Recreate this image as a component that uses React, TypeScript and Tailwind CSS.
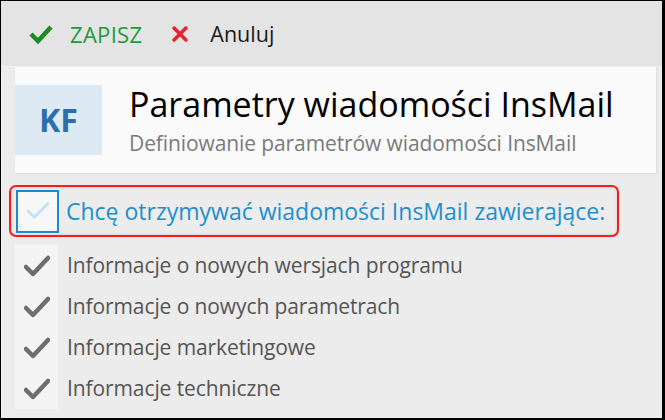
import { Check, X } from "lucide-react";

const items = [
  "Informacje o nowych wersjach programu",
  "Informacje o nowych parametrach",
  "Informacje marketingowe",
  "Informacje techniczne",
];

function GrayCheck() {
  return (
    <svg width="26" height="22" viewBox="0 0 26 22">
      <path d="M2 12 L9 19 L24 3" fill="none" stroke="#6e6e6e" strokeWidth="4.5" strokeLinecap="round" strokeLinejoin="round" />
    </svg>
  );
}

export default function App() {
  return (
    <div
      className="w-[665px] h-[420px] flex flex-col border-l border-t border-r-[3px] border-b-2 border-black bg-[#ececec] overflow-hidden"
      style={{ fontFamily: '"Open Sans", "Noto Sans", sans-serif' }}
    >
      <div className="h-[66px] shrink-0 bg-[#e4e4e4] flex items-center pl-[27px] border-b border-[#f2f2f2]">
        <button className="flex items-center gap-[16px]">
          <svg width="26" height="20" viewBox="0 0 26 20">
            <path d="M3 10 L10 17 L23 3" fill="none" stroke="#1e8a22" strokeWidth="4.5" strokeLinejoin="miter" />
          </svg>
          <span className="text-[22px] text-[#1c9a3a] leading-none tracking-[0.3px]">ZAPISZ</span>
        </button>
        <button className="flex items-center gap-[18px] ml-[26px]">
          <X size={24} strokeWidth={3.5} color="#e8222d" />
          <span className="text-[21.5px] text-[#1a1a1a] leading-none">Anuluj</span>
        </button>
      </div>

      <div className="flex-1 flex flex-col pl-[14px] pr-[6px]">
        <div className="h-[106px] shrink-0 bg-[#fafafa] flex items-center gap-[27px] shadow-[1px_1px_2px_rgba(0,0,0,0.08)]">
          <div className="w-[87px] h-[70px] bg-[#dde9f3] flex items-center justify-center">
            <span className="text-[32px] font-bold text-[#2c6fae]">KF</span>
          </div>
          <div className="flex flex-col -mt-[2px]">
            <h1 className="text-[34px] text-black leading-[40px]">Parametry wiadomości InsMail</h1>
            <p className="text-[21px] text-[#7b7b7b] leading-[24px] mt-[7px] tracking-[-0.1px]">
              Definiowanie parametrów wiadomości InsMail
            </p>
          </div>
        </div>

        <div className="mt-[12px] -ml-[6px] w-[610px] h-[52px] border-2 border-[#ff1a1a] rounded-[7px] flex items-center pl-[5px] shadow-[inset_0_0_3px_rgba(0,0,0,0.15)]">
          <div className="w-[43px] h-[43px] border-2 border-[#1a8ad4] bg-[#f7f7f7] flex items-center justify-center">
            <Check size={30} strokeWidth={2} color="#bfe3f5" />
          </div>
          <span className="ml-[7px] text-[23px] text-[#1f8fcc] leading-none">Chcę otrzymywać wiadomości InsMail zawierające:</span>
        </div>

        <div className="mt-[8px] flex flex-col">
          {items.map((t) => (
            <div key={t} className="flex items-center h-[41px]">
              <div className="w-[43px] h-full bg-[#f4f4f4] flex items-center justify-center">
                <GrayCheck />
              </div>
              <span className="ml-[9px] text-[21px] text-[#555555] leading-none tracking-[-0.1px]">{t}</span>
            </div>
          ))}
        </div>
      </div>
    </div>
  );
}
